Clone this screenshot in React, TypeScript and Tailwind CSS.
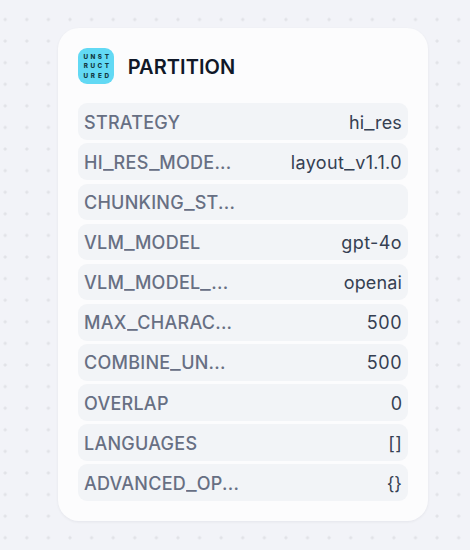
import { Fragment } from "react";

const rows: [string, string, string][] = [
  ["STRATEGY", "hi_res", "tracking-[0.15px]"],
  ["HI_RES_MODE...", "layout_v1.1.0", "tracking-[0.4px]"],
  ["CHUNKING_ST...", "", ""],
  ["VLM_MODEL", "gpt-4o", "tracking-[0.4px]"],
  ["VLM_MODEL_...", "openai", "tracking-[0.15px]"],
  ["MAX_CHARAC...", "500", "tracking-[0.5px]"],
  ["COMBINE_UN...", "500", "tracking-[0.5px]"],
  ["OVERLAP", "0", ""],
  ["LANGUAGES", "[]", "tracking-[0.3px]"],
  ["ADVANCED_OP...", "{}", ""],
];

function WideUnderscores({ text }: { text: string }) {
  return text.split("_").map((part, i) => (
    <Fragment key={i}>
      {i > 0 && <span className="inline-block w-[10.8px] origin-left scale-x-[1.28] tracking-normal">_</span>}
      {part}
    </Fragment>
  ));
}

function Logo() {
  return (
    <div className="flex h-9 w-9 flex-col items-center justify-center gap-[4.5px] rounded-[9px] bg-[#62d9f4] pt-[1.5px]">
      {["UNST", "RUCT", "URED"].map((line) => (
        <div key={line} className="grid grid-cols-4 text-center text-[6.3px] leading-[5px] font-extrabold text-[#123842]">
          {line.split("").map((letter, i) => (
            <span key={i} className="w-[7px]">{letter}</span>
          ))}
        </div>
      ))}
    </div>
  );
}

export default function App() {
  return (
    <div className="h-[550px] w-[470px] overflow-hidden bg-[#f2f3f8] bg-[radial-gradient(circle_at_center,#e1e2e7_1.3px,transparent_1.8px)] bg-[length:21.6px_21.6px] bg-[position:-5.6px_8.7px] pt-7 pl-[58px] font-['Inter',sans-serif]">
      <div className="h-[493px] w-[370px] rounded-[21px] bg-[#fcfcfd] px-5 pt-5 shadow-[0_1px_3px_rgba(16,24,40,0.06)]">
        <div className="flex h-9 items-center gap-[13.4px] pl-[0.3px]">
          <Logo />
          <h1 className="pt-[2px] text-[20px] leading-[28px] font-semibold tracking-[0.08px] text-[#101828]">PARTITION</h1>
        </div>
        <div className="mt-[19.3px] flex flex-col gap-[3.43px]">
          {rows.map(([label, value, tracking]) => (
            <div key={label} className="flex h-[36.7px] items-center justify-between rounded-[9px] bg-[#f2f4f7] px-[6px] pt-[2.3px] text-[18px] leading-6">
              <span className="font-medium tracking-[0.25px] text-[#676f83]"><WideUnderscores text={label} /></span>
              <span className={"text-[#354052] " + tracking}><WideUnderscores text={value} /></span>
            </div>
          ))}
        </div>
      </div>
    </div>
  );
}
